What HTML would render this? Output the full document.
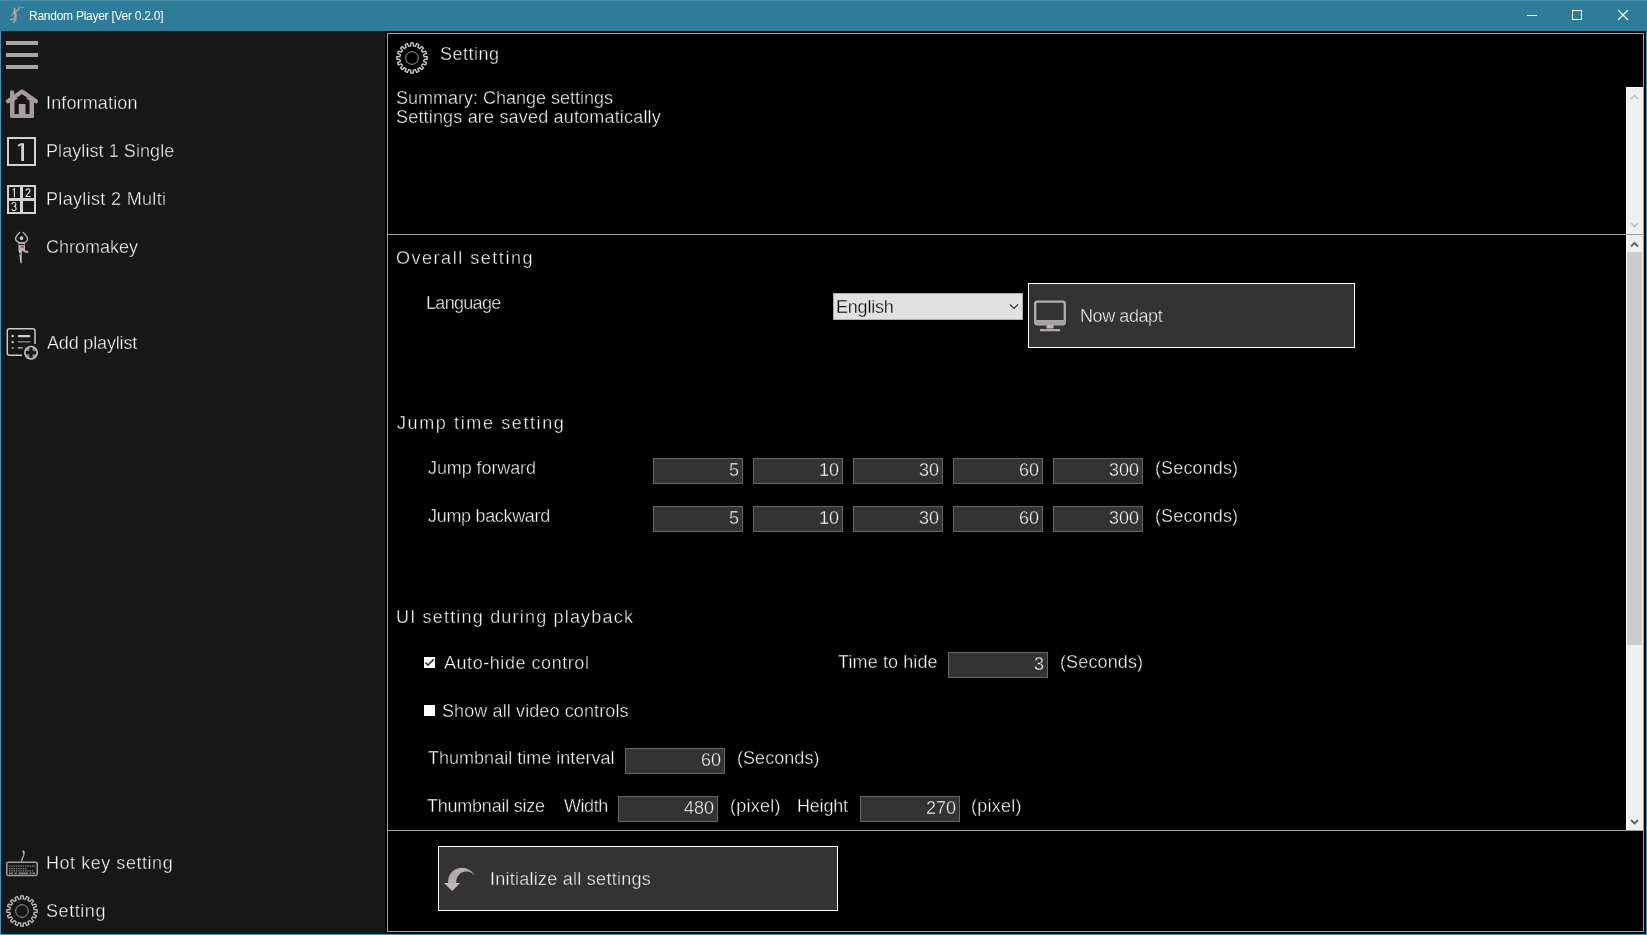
<!DOCTYPE html>
<html><head><meta charset="utf-8"><title>Random Player</title>
<style>
html,body{margin:0;padding:0}
body{width:1647px;height:935px;overflow:hidden;background:#000;position:relative;font-family:"Liberation Sans",sans-serif}
.a{position:absolute}
.t{position:absolute;white-space:pre;font-family:"Liberation Sans",sans-serif;will-change:transform}
.inp{position:absolute;box-sizing:border-box;background:#333;border:1px solid #666}
svg{position:absolute;overflow:visible}
</style></head><body>
<!-- window frame -->
<div class="a" style="left:0;top:0;width:1647px;height:31px;background:#2d7d9a"></div>
<div class="a" style="left:0;top:0;width:1647px;height:1px;background:#4289a5"></div>
<div class="a" style="left:0;top:31px;width:1px;height:904px;background:#4896b4"></div>
<div class="a" style="left:1646px;top:31px;width:1px;height:904px;background:#4896b4"></div>
<div class="a" style="left:0;top:934px;width:1647px;height:1px;background:#4896b4"></div>
<!-- title icon -->
<svg style="left:0;top:0" width="40" height="31" viewBox="0 0 40 31">
 <g fill="none" stroke="#b9a39d" stroke-linecap="round" stroke-linejoin="round">
  <path d="M19.4,7.4 L18.6,9.6 L16.2,11.2" stroke-width="1.3"/>
  <path d="M14.6,11.2 L15.6,15.6" stroke-width="2.6"/>
  <path d="M15.2,15.8 L14.2,19 L10.4,19.6" stroke-width="1.4"/>
  <path d="M15.8,16 L15.9,19.5 L13.3,22.6" stroke-width="1.4"/>
  <path d="M13.8,12 L12,15.6" stroke-width="1"/>
 </g>
 <circle cx="14.6" cy="8.9" r="1.1" fill="#b9a39d"/>
 <path d="M21.3,7.4 h2.4" stroke="#b9a39d" stroke-width="1"/>
</svg>
<!-- window controls -->
<div class="a" style="left:1527px;top:15px;width:10px;height:1px;background:#fff"></div>
<div class="a" style="left:1572px;top:10px;width:10px;height:10px;box-sizing:border-box;border:1px solid #fff"></div>
<svg style="left:1617px;top:9px" width="12" height="12" viewBox="0 0 12 12"><path d="M1,1 L11,11 M11,1 L1,11" stroke="#fff" stroke-width="1.1"/></svg>

<!-- sidebar -->
<div class="a" style="left:1px;top:31px;width:384px;height:903px;background:#171717"></div>
<!-- hamburger -->
<div class="a" style="left:6px;top:41px;width:32px;height:4px;background:#aaa4a3"></div>
<div class="a" style="left:6px;top:53px;width:32px;height:4px;background:#aaa4a3"></div>
<div class="a" style="left:6px;top:65px;width:32px;height:4px;background:#aaa4a3"></div>
<!-- house -->
<svg style="left:0;top:86px" width="44" height="36" viewBox="0 86 44 36">
 <path d="M8,101.3 L22,91.6 L36,101.3" fill="none" stroke="#a59d9b" stroke-width="4.2" stroke-linecap="round" stroke-linejoin="round"/>
 <rect x="10" y="98" width="24" height="20" rx="1.5" fill="#a59d9b"/>
 <rect x="10" y="90.3" width="4.2" height="9" rx="2" fill="#a59d9b"/>
 <path d="M14.5,114 V100.8 L22,95.2 L29.5,100.8 V114 Z" fill="#171717"/>
 <rect x="18.8" y="104" width="6.7" height="11" fill="#aaa2a0"/>
</svg>
<!-- playlist 1 -->
<div class="a" style="left:7px;top:137px;width:29px;height:29px;box-sizing:border-box;border:2px solid #d2d2d2"></div>
<svg style="left:0;top:130px" width="44" height="40" viewBox="0 130 44 40">
 <path d="M21.2,143.3 h2.8 v17.7 h-2.8 Z" fill="#d4d4d4"/>
 <path d="M17.8,145.6 C19.5,145.3 21,144.6 21.6,143.4" stroke="#d4d4d4" stroke-width="1.6" fill="none"/>
</svg>
<!-- playlist 2 -->
<div class="a" style="left:7px;top:185px;width:29px;height:29px;box-sizing:border-box;border:2px solid #d2d2d2"></div>
<div class="a" style="left:20px;top:185px;width:3px;height:29px;background:#d2d2d2"></div>
<div class="a" style="left:7px;top:198px;width:29px;height:3px;background:#d2d2d2"></div>
<svg style="left:0;top:180px" width="44" height="40" viewBox="0 180 44 40">
 <g fill="none" stroke="#e6e6e6" stroke-width="1.1" stroke-linecap="square">
  <path d="M13,189.8 L14.4,188.6 V196.6"/>
  <path d="M26.1,190.2 C26.3,188.6 29.9,188.2 30,190.4 C30.1,192.3 26.5,194.4 26.1,196.5 H30.1"/>
  <path d="M12.1,203.6 C12.4,202.2 15.9,202 15.9,204.3 C15.9,205.8 14.6,206.3 13.8,206.3 C14.8,206.3 16.1,207 16.1,208.7 C16.1,211 12.5,211.2 12,209.4"/>
 </g>
</svg>
<!-- chromakey figure -->
<svg style="left:8px;top:228px" width="28" height="40" viewBox="8 228 28 40">
 <g fill="none" stroke="#bdb6b6" stroke-width="1.35" stroke-linecap="round" stroke-linejoin="round">
  <path d="M19.6,232.4 C17.8,234.2 15.6,236.6 15.5,238.6 C15.6,240.3 17,241.6 18.6,242.3"/>
  <path d="M23.2,232.4 C25.2,234.3 27.6,236.9 27.6,239 C27.4,240.8 26.3,242 25,242.6"/>
 </g>
 <circle cx="21.5" cy="238.1" r="1.9" fill="#c8c4c4"/>
 <path d="M18.4,242 h6.6 v9.2 h-6.6 Z" fill="#b9b1b1"/>
 <path d="M18.8,244.5 h5.8" stroke="#202020" stroke-width="1.2"/>
 <path d="M20.6,247 h3.4" stroke="#b82020" stroke-width="1.2"/>
 <path d="M23.5,249.3 L28.6,251.6 L27.6,253.2 L23.5,252 Z" fill="#a9a3a3"/>
 <path d="M18.9,251 L21.8,251 L21.7,263.2 L20.5,263.2 Z" fill="#c4c0c0"/>
 <path d="M19,253.9 h2" stroke="#2535a5" stroke-width="1.1"/>
</svg>
<!-- add playlist -->
<svg style="left:0;top:322px" width="44" height="42" viewBox="0 322 44 42">
 <path d="M22,355.3 H9.5 Q7.3,355.3 7.3,353 V331 Q7.3,328.8 9.5,328.8 H32.7 Q35,328.8 35,331 V344" fill="none" stroke="#cfc9c9" stroke-width="1.5"/>
 <circle cx="12.6" cy="336" r="1.3" fill="#cfcfcf"/>
 <circle cx="12.6" cy="342" r="1.3" fill="#bbb"/>
 <circle cx="12.6" cy="348" r="1.1" fill="#999"/>
 <rect x="17.8" y="335" width="12.5" height="2.2" rx="1" fill="#d0d0d0"/>
 <rect x="17.8" y="341" width="12.5" height="1.6" fill="#777"/>
 <rect x="17.8" y="347" width="5" height="1.6" fill="#999"/>
 <circle cx="31" cy="352.7" r="6.2" fill="#8d8787" stroke="#c4bebe" stroke-width="1.6"/>
 <path d="M31,347.6 v10.2 M25.9,352.7 h10.2" stroke="#161616" stroke-width="3.2"/>
</svg>
<!-- keyboard -->
<svg style="left:0;top:846px" width="44" height="34" viewBox="0 846 44 34">
 <rect x="6.8" y="862.2" width="30.4" height="13.2" rx="1.3" fill="none" stroke="#a6a09e" stroke-width="1.5"/>
 <path d="M21.6,862 C21.4,859 22.8,857.5 23.6,856 C24.3,854.5 23.5,852.5 23.2,850.5" fill="none" stroke="#a9a4a4" stroke-width="1.4"/>
 <path d="M23.1,850.8 L24.2,853.5" stroke="#b0abab" stroke-width="1.8"/>
 <g fill="none" stroke="#8d8888" stroke-dasharray="1.4 0.9">
  <path d="M9,866.2 H35" stroke-width="1.2"/>
  <path d="M9,868.6 H27" stroke-width="1.1"/>
  <path d="M9,870.9 H33" stroke-width="1.1"/>
 </g>
 <path d="M9,873.2 H13 M14.5,873.2 H17 M18.5,873.2 H28 M29.5,873.2 H31.5 M32.5,873.2 H35" stroke="#8a8484" stroke-width="1.5"/>
</svg>
<!-- gear sidebar -->
<svg style="left:6px;top:895px" width="32" height="32" viewBox="0 0 32 32">
 <path d="M14.71,3.87 L14.75,0.85 L17.25,0.85 L17.29,3.87 L19.45,4.30 L20.64,1.53 L22.95,2.48 L21.84,5.29 L23.67,6.51 L25.83,4.40 L27.60,6.17 L25.49,8.33 L26.71,10.16 L29.52,9.05 L30.47,11.36 L27.70,12.55 L28.13,14.71 L31.15,14.75 L31.15,17.25 L28.13,17.29 L27.70,19.45 L30.47,20.64 L29.52,22.95 L26.71,21.84 L25.49,23.67 L27.60,25.83 L25.83,27.60 L23.67,25.49 L21.84,26.71 L22.95,29.52 L20.64,30.47 L19.45,27.70 L17.29,28.13 L17.25,31.15 L14.75,31.15 L14.71,28.13 L12.55,27.70 L11.36,30.47 L9.05,29.52 L10.16,26.71 L8.33,25.49 L6.17,27.60 L4.40,25.83 L6.51,23.67 L5.29,21.84 L2.48,22.95 L1.53,20.64 L4.30,19.45 L3.87,17.29 L0.85,17.25 L0.85,14.75 L3.87,14.71 L4.30,12.55 L1.53,11.36 L2.48,9.05 L5.29,10.16 L6.51,8.33 L4.40,6.17 L6.17,4.40 L8.33,6.51 L10.16,5.29 L9.05,2.48 L11.36,1.53 L12.55,4.30 Z" fill="none" stroke="#c0bab8" stroke-width="1.3" stroke-linejoin="round"/>
 <circle cx="16" cy="16" r="6.3" fill="none" stroke="#9a9595" stroke-width="1"/>
</svg>

<!-- main panel -->
<div class="a" style="left:387px;top:33px;width:1257px;height:899px;box-sizing:border-box;border:1px solid #a0a0a0"></div>
<div class="a" style="left:387px;top:234px;width:1257px;height:1px;background:#a0a0a0"></div>
<div class="a" style="left:387px;top:830px;width:1257px;height:1px;background:#a0a0a0"></div>
<!-- header gear -->
<svg style="left:396px;top:42px" width="32" height="32" viewBox="0 0 32 32">
 <path d="M14.71,3.87 L14.75,0.85 L17.25,0.85 L17.29,3.87 L19.45,4.30 L20.64,1.53 L22.95,2.48 L21.84,5.29 L23.67,6.51 L25.83,4.40 L27.60,6.17 L25.49,8.33 L26.71,10.16 L29.52,9.05 L30.47,11.36 L27.70,12.55 L28.13,14.71 L31.15,14.75 L31.15,17.25 L28.13,17.29 L27.70,19.45 L30.47,20.64 L29.52,22.95 L26.71,21.84 L25.49,23.67 L27.60,25.83 L25.83,27.60 L23.67,25.49 L21.84,26.71 L22.95,29.52 L20.64,30.47 L19.45,27.70 L17.29,28.13 L17.25,31.15 L14.75,31.15 L14.71,28.13 L12.55,27.70 L11.36,30.47 L9.05,29.52 L10.16,26.71 L8.33,25.49 L6.17,27.60 L4.40,25.83 L6.51,23.67 L5.29,21.84 L2.48,22.95 L1.53,20.64 L4.30,19.45 L3.87,17.29 L0.85,17.25 L0.85,14.75 L3.87,14.71 L4.30,12.55 L1.53,11.36 L2.48,9.05 L5.29,10.16 L6.51,8.33 L4.40,6.17 L6.17,4.40 L8.33,6.51 L10.16,5.29 L9.05,2.48 L11.36,1.53 L12.55,4.30 Z" fill="none" stroke="#cfcfcf" stroke-width="1.3" stroke-linejoin="round"/>
 <circle cx="16" cy="16" r="6.3" fill="none" stroke="#9a9a9a" stroke-width="1"/>
</svg>
<!-- scrollbar 1 (disabled) -->
<div class="a" style="left:1626px;top:87px;width:17px;height:147px;background:#f0f0f0;box-shadow:inset 1px 1px 0 #fff"></div>
<svg style="left:1626px;top:87px" width="17" height="147" viewBox="0 0 17 147">
 <path d="M5,12 L8.5,8.5 L12,12" fill="none" stroke="#c0c0c0" stroke-width="1.6"/>
 <path d="M5,136 L8.5,139.5 L12,136" fill="none" stroke="#c0c0c0" stroke-width="1.6"/>
</svg>
<!-- scrollbar 2 -->
<div class="a" style="left:1626px;top:235px;width:17px;height:595px;background:#f0f0f0;box-shadow:inset 1px 0 0 #fff"></div>
<div class="a" style="left:1627px;top:252px;width:15px;height:393px;background:#cdcdcd"></div>
<svg style="left:1626px;top:235px" width="17" height="595" viewBox="0 0 17 595">
 <path d="M5,11.5 L8.5,8 L12,11.5" fill="none" stroke="#606060" stroke-width="1.8"/>
 <path d="M5,585 L8.5,588.5 L12,585" fill="none" stroke="#606060" stroke-width="1.8"/>
</svg>

<!-- combobox -->
<div class="a" style="left:833px;top:293px;width:190px;height:27px;box-sizing:border-box;background:#e1e1e1;border:1px solid #adadad"></div>
<svg style="left:1008px;top:302px" width="12" height="8" viewBox="0 0 12 8"><path d="M2,2.5 L6,6.5 L10,2.5" fill="none" stroke="#333" stroke-width="1.2"/></svg>
<!-- now adapt button -->
<div class="a" style="left:1028px;top:283px;width:327px;height:65px;box-sizing:border-box;background:#333;border:1px solid #fff"></div>
<svg style="left:1030px;top:296px" width="40" height="40" viewBox="1030 296 40 40">
 <rect x="1035.2" y="301.7" width="29.6" height="22.6" rx="2.2" fill="none" stroke="#b5b0b0" stroke-width="2.3"/>
 <rect x="1035" y="320" width="30" height="4.8" fill="#a9a4a4"/>
 <rect x="1046.5" y="325" width="7" height="3.5" rx="1.2" fill="#bbb"/>
 <rect x="1040" y="329" width="20" height="2.3" fill="#b0abab"/>
</svg>
<!-- inputs -->
<div class="inp" style="left:653px;top:458px;width:90px;height:26px"></div>
<div class="inp" style="left:653px;top:506px;width:90px;height:26px"></div>
<div class="inp" style="left:753px;top:458px;width:90px;height:26px"></div>
<div class="inp" style="left:753px;top:506px;width:90px;height:26px"></div>
<div class="inp" style="left:853px;top:458px;width:90px;height:26px"></div>
<div class="inp" style="left:853px;top:506px;width:90px;height:26px"></div>
<div class="inp" style="left:953px;top:458px;width:90px;height:26px"></div>
<div class="inp" style="left:953px;top:506px;width:90px;height:26px"></div>
<div class="inp" style="left:1053px;top:458px;width:90px;height:26px"></div>
<div class="inp" style="left:1053px;top:506px;width:90px;height:26px"></div>
<div class="inp" style="left:948px;top:652px;width:100px;height:26px"></div>
<div class="inp" style="left:625px;top:748px;width:100px;height:26px"></div>
<div class="inp" style="left:618px;top:796px;width:100px;height:26px"></div>
<div class="inp" style="left:860px;top:796px;width:100px;height:26px"></div>
<!-- checkboxes -->
<div class="a" style="left:424px;top:657px;width:11px;height:11px;background:#fff"></div>
<svg style="left:420px;top:652px" width="20" height="20" viewBox="420 652 20 20"><path d="M425.5,662.5 L428,665 L433.6,659.4" fill="none" stroke="#333" stroke-width="1.6"/></svg>
<div class="a" style="left:424px;top:705px;width:11px;height:11px;background:#fff"></div>
<!-- initialize button -->
<div class="a" style="left:438px;top:846px;width:400px;height:65px;box-sizing:border-box;background:#333;border:1px solid #fff"></div>
<svg style="left:440px;top:860px" width="40" height="36" viewBox="440 860 40 36">
 <path d="M474.7,875.8 C471,868 461,865 453.5,870.5 C449.5,873.5 448,878 448,883.1 L456.2,883.1 C456,879 457.5,875.5 460.5,873.3 C465,870.2 471.5,871 474.7,875.8 Z" fill="#b4adad"/>
 <path d="M444,883.1 L460.2,883.1 L452.1,891 Z" fill="#c0b9b9"/>
</svg>

<!-- texts -->
<span id="t_title" class="t" style="left:29.30px;top:10px;font-size:12px;line-height:12px;letter-spacing:-0.258px;color:#fff;-webkit-text-stroke:0px #2d7d9a">Random Player [Ver 0.2.0]</span>
<span id="s_info" class="t" style="left:46.38px;top:94px;font-size:18px;line-height:18px;letter-spacing:0.140px;color:#fff;-webkit-text-stroke:0.4px #171717">Information</span>
<span id="s_pl1" class="t" style="left:46.46px;top:142px;font-size:18px;line-height:18px;letter-spacing:0.075px;color:#fff;-webkit-text-stroke:0.4px #171717">Playlist 1 Single</span>
<span id="s_pl2" class="t" style="left:46.46px;top:190px;font-size:18px;line-height:18px;letter-spacing:0.333px;color:#fff;-webkit-text-stroke:0.4px #171717">Playlist 2 Multi</span>
<span id="s_chroma" class="t" style="left:46.26px;top:238px;font-size:18px;line-height:18px;letter-spacing:-0.000px;color:#fff;-webkit-text-stroke:0.4px #171717">Chromakey</span>
<span id="s_add" class="t" style="left:46.72px;top:334px;font-size:18px;line-height:18px;letter-spacing:-0.164px;color:#fff;-webkit-text-stroke:0.4px #171717">Add playlist</span>
<span id="s_hot" class="t" style="left:45.88px;top:854px;font-size:18px;line-height:18px;letter-spacing:0.543px;color:#fff;-webkit-text-stroke:0.4px #171717">Hot key setting</span>
<span id="s_set" class="t" style="left:45.84px;top:902px;font-size:18px;line-height:18px;letter-spacing:0.567px;color:#fff;-webkit-text-stroke:0.4px #171717">Setting</span>
<span id="h_set" class="t" style="left:439.96px;top:45px;font-size:18px;line-height:18px;letter-spacing:0.500px;color:#fff;-webkit-text-stroke:0.4px #000">Setting</span>
<span id="sum1" class="t" style="left:396.22px;top:89px;font-size:18px;line-height:18px;letter-spacing:-0.009px;color:#fff;-webkit-text-stroke:0.4px #000">Summary: Change settings</span>
<span id="sum2" class="t" style="left:396.22px;top:108px;font-size:18px;line-height:18px;letter-spacing:0.181px;color:#fff;-webkit-text-stroke:0.4px #000">Settings are saved automatically</span>
<span id="sec1" class="t" style="left:395.64px;top:249px;font-size:18px;line-height:18px;letter-spacing:1.529px;color:#fff;-webkit-text-stroke:0.4px #000">Overall setting</span>
<span id="lang" class="t" style="left:426.34px;top:294px;font-size:18px;line-height:18px;letter-spacing:-0.686px;color:#fff;-webkit-text-stroke:0.4px #000">Language</span>
<span id="english" class="t" style="left:835.82px;top:298px;font-size:18px;line-height:18px;letter-spacing:-0.200px;color:#000;-webkit-text-stroke:0.3px #e1e1e1">English</span>
<span id="nowadapt" class="t" style="left:1080.46px;top:307px;font-size:18px;line-height:18px;letter-spacing:-0.425px;color:#fff;-webkit-text-stroke:0.4px #333">Now adapt</span>
<span id="sec2" class="t" style="left:396.84px;top:414px;font-size:18px;line-height:18px;letter-spacing:1.613px;color:#fff;-webkit-text-stroke:0.4px #000">Jump time setting</span>
<span id="jf" class="t" style="left:427.84px;top:459px;font-size:18px;line-height:18px;letter-spacing:-0.091px;color:#fff;-webkit-text-stroke:0.4px #000">Jump forward</span>
<span id="jb" class="t" style="left:427.84px;top:507px;font-size:18px;line-height:18px;letter-spacing:-0.317px;color:#fff;-webkit-text-stroke:0.4px #000">Jump backward</span>
<span id="sec_r1" class="t" style="left:1155.30px;top:459px;font-size:18px;line-height:18px;letter-spacing:0.125px;color:#fff;-webkit-text-stroke:0.4px #000">(Seconds)</span>
<span id="sec_r2" class="t" style="left:1155.30px;top:507px;font-size:18px;line-height:18px;letter-spacing:0.125px;color:#fff;-webkit-text-stroke:0.4px #000">(Seconds)</span>
<span id="sec3" class="t" style="left:396.22px;top:608px;font-size:18px;line-height:18px;letter-spacing:1.192px;color:#fff;-webkit-text-stroke:0.4px #000">UI setting during playback</span>
<span id="autohide" class="t" style="left:443.96px;top:654px;font-size:18px;line-height:18px;letter-spacing:0.550px;color:#fff;-webkit-text-stroke:0.4px #000">Auto-hide control</span>
<span id="tth" class="t" style="left:837.80px;top:653px;font-size:18px;line-height:18px;letter-spacing:0.109px;color:#fff;-webkit-text-stroke:0.4px #000">Time to hide</span>
<span id="sec_tth" class="t" style="left:1059.80px;top:653px;font-size:18px;line-height:18px;letter-spacing:0.125px;color:#fff;-webkit-text-stroke:0.4px #000">(Seconds)</span>
<span id="showall" class="t" style="left:441.68px;top:702px;font-size:18px;line-height:18px;letter-spacing:0.109px;color:#fff;-webkit-text-stroke:0.4px #000">Show all video controls</span>
<span id="tti" class="t" style="left:427.84px;top:749px;font-size:18px;line-height:18px;letter-spacing:0.018px;color:#fff;-webkit-text-stroke:0.4px #000">Thumbnail time interval</span>
<span id="sec_tti" class="t" style="left:736.96px;top:749px;font-size:18px;line-height:18px;letter-spacing:0.050px;color:#fff;-webkit-text-stroke:0.4px #000">(Seconds)</span>
<span id="tsize" class="t" style="left:427.46px;top:797px;font-size:18px;line-height:18px;letter-spacing:-0.231px;color:#fff;-webkit-text-stroke:0.4px #000">Thumbnail size</span>
<span id="twidth" class="t" style="left:563.84px;top:797px;font-size:18px;line-height:18px;letter-spacing:-0.450px;color:#fff;-webkit-text-stroke:0.4px #000">Width</span>
<span id="px1" class="t" style="left:729.68px;top:797px;font-size:18px;line-height:18px;letter-spacing:0.267px;color:#fff;-webkit-text-stroke:0.4px #000">(pixel)</span>
<span id="theight" class="t" style="left:797.34px;top:797px;font-size:18px;line-height:18px;letter-spacing:-0.200px;color:#fff;-webkit-text-stroke:0.4px #000">Height</span>
<span id="px2" class="t" style="left:971.22px;top:797px;font-size:18px;line-height:18px;letter-spacing:0.233px;color:#fff;-webkit-text-stroke:0.4px #000">(pixel)</span>
<span id="init" class="t" style="left:489.76px;top:870px;font-size:18px;line-height:18px;letter-spacing:0.255px;color:#fff;-webkit-text-stroke:0.4px #333">Initialize all settings</span>
<span id="d_f1" class="t" style="right:907.70px;top:461px;font-size:18px;line-height:18px;color:#fff;-webkit-text-stroke:0.4px #333">5</span>
<span id="d_f2" class="t" style="right:807.70px;top:461px;font-size:18px;line-height:18px;color:#fff;-webkit-text-stroke:0.4px #333">10</span>
<span id="d_f3" class="t" style="right:707.70px;top:461px;font-size:18px;line-height:18px;color:#fff;-webkit-text-stroke:0.4px #333">30</span>
<span id="d_f4" class="t" style="right:607.70px;top:461px;font-size:18px;line-height:18px;color:#fff;-webkit-text-stroke:0.4px #333">60</span>
<span id="d_f5" class="t" style="right:507.70px;top:461px;font-size:18px;line-height:18px;color:#fff;-webkit-text-stroke:0.4px #333">300</span>
<span id="d_b1" class="t" style="right:907.70px;top:509px;font-size:18px;line-height:18px;color:#fff;-webkit-text-stroke:0.4px #333">5</span>
<span id="d_b2" class="t" style="right:807.70px;top:509px;font-size:18px;line-height:18px;color:#fff;-webkit-text-stroke:0.4px #333">10</span>
<span id="d_b3" class="t" style="right:707.70px;top:509px;font-size:18px;line-height:18px;color:#fff;-webkit-text-stroke:0.4px #333">30</span>
<span id="d_b4" class="t" style="right:607.70px;top:509px;font-size:18px;line-height:18px;color:#fff;-webkit-text-stroke:0.4px #333">60</span>
<span id="d_b5" class="t" style="right:507.70px;top:509px;font-size:18px;line-height:18px;color:#fff;-webkit-text-stroke:0.4px #333">300</span>
<span id="d_tth" class="t" style="right:602.70px;top:655px;font-size:18px;line-height:18px;color:#fff;-webkit-text-stroke:0.4px #333">3</span>
<span id="d_tti" class="t" style="right:925.70px;top:751px;font-size:18px;line-height:18px;color:#fff;-webkit-text-stroke:0.4px #333">60</span>
<span id="d_w" class="t" style="right:932.70px;top:799px;font-size:18px;line-height:18px;color:#fff;-webkit-text-stroke:0.4px #333">480</span>
<span id="d_h" class="t" style="right:690.70px;top:799px;font-size:18px;line-height:18px;color:#fff;-webkit-text-stroke:0.4px #333">270</span>
</body></html>
